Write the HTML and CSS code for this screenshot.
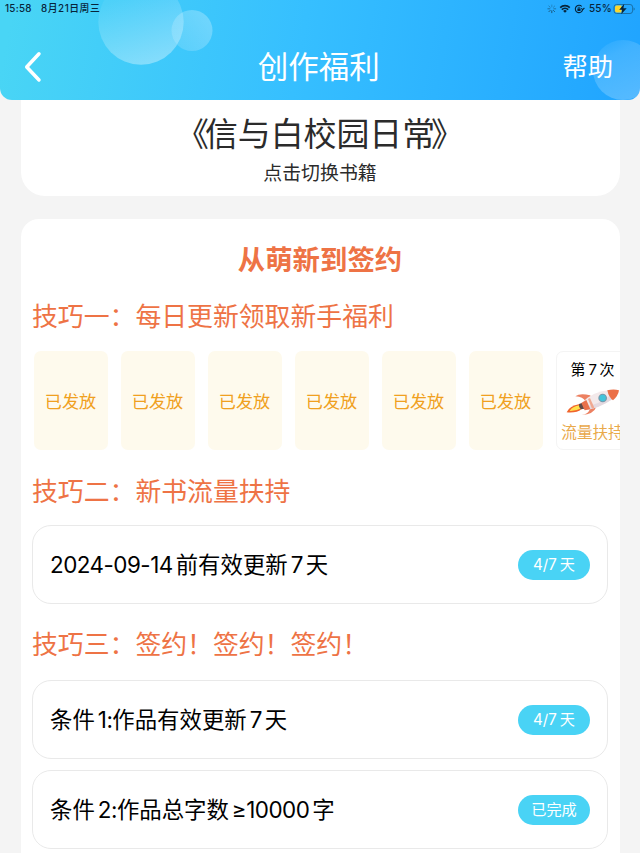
FILE: index.html
```html
<!DOCTYPE html>
<html lang="zh-CN">
<head>
<meta charset="utf-8">
<title>创作福利</title>
<link rel="stylesheet" href="styles.css">
</head>
<body>
<header class="header">
  <svg class="bubbles" width="640" height="100" viewBox="0 0 640 100" aria-hidden="true">
    <defs>
      <linearGradient id="b1" x1="0.25" y1="0" x2="0.6" y2="1"><stop offset="0.2" stop-color="#fff" stop-opacity=".06"/><stop offset="1" stop-color="#fff" stop-opacity=".36"/></linearGradient>
      <linearGradient id="b2" x1="1" y1="0.1" x2="0" y2="0.8"><stop offset="0" stop-color="#fff" stop-opacity=".28"/><stop offset="1" stop-color="#fff" stop-opacity=".14"/></linearGradient>
      <linearGradient id="b3" x1="0.2" y1="0" x2="0.7" y2="1"><stop offset="0" stop-color="#fff" stop-opacity=".04"/><stop offset="0.25" stop-color="#fff" stop-opacity=".14"/><stop offset="1" stop-color="#fff" stop-opacity=".24"/></linearGradient>
    </defs>
    <circle cx="192" cy="30.5" r="20.5" fill="url(#b2)"/>
    <circle cx="141" cy="22" r="42.7" fill="url(#b1)"/>
    <circle cx="623" cy="70" r="30" fill="url(#b3)"/>
  </svg>
  <div class="status">
    <span class="time">15:58</span>
    <span class="date">8月21日周三</span>
    <svg class="status-icons" width="50" height="14" viewBox="0 0 50 14" aria-hidden="true">
      <g transform="translate(-.5 -1.5)">
      <g stroke="#164a68" stroke-width=".9" stroke-linecap="round"><path d="M8.3 4.5v1.9" opacity=".4"/><path d="M11.2 5.5 9.9 6.8" opacity=".45"/><path d="M12.2 8.3h-1.9" opacity=".6"/><path d="M11.2 11.2 9.9 9.9" opacity=".8"/><path d="M8.3 12.2v-1.9"/><path d="M5.4 11.2l1.3-1.3" opacity=".9"/><path d="M4.4 8.3h1.9" opacity=".7"/><path d="M5.4 5.5l1.3 1.3" opacity=".5"/></g>
      <path d="M21.5 12.3 19.6 10.4a2.8 2.8 0 0 1 3.8 0z" fill="#07243a"/>
      <path d="M18.3 9.1a4.6 4.6 0 0 1 6.4 0M16.7 7.1a6.9 6.9 0 0 1 9.6 0" fill="none" stroke="#07243a" stroke-width="1.6"/>
      <path d="M38.300 6a3.700 3.700 0 1 0 .9 2.900M40.900 7.500l-1.600 1.600-1.600-1.200" fill="none" stroke="#07243a" stroke-width="1.1"/>
      <rect x="33.900" y="8.100" width="3.200" height="2.400" rx=".4" fill="#07243a"/><path d="M34.600 8.200v-.8a.9.9 0 0 1 1.800 0v.8" fill="none" stroke="#07243a" stroke-width=".7"/>
      </g>
    </svg>
    <span class="percent">55%</span>
    <svg class="battery" width="23" height="12" viewBox="0 0 23 12" aria-hidden="true">
      <rect x="1" y="1.5" width="18.6" height="9" rx="2.6" fill="none" stroke="#176b9f" stroke-width=".9"/>
      <path d="M3.8 2.5h4.7v7H3.8A1.8 1.8 0 0 1 2 7.7V4.3a1.8 1.8 0 0 1 1.8-1.8z" fill="#fbd62d"/>
      <path d="M20.6 4.5v3q1.1-.3 1.1-1.5t-1.1-1.5z" fill="#176b9f"/>
      <path d="M11.3.8 6.2 6.7h3L8.2 11.2 13.7 5.2h-3.3z" fill="#07243a"/>
    </svg>
  </div>
  <nav class="nav">
    <svg class="back" width="20" height="32" viewBox="0 0 20 32" aria-hidden="true"><path d="M16 2.8 3.7 16 16 29" fill="none" stroke="#fff" stroke-width="3.5" stroke-linecap="round" stroke-linejoin="round"/></svg>
    <h1 class="nav-title">创作福利</h1>
    <a class="help">帮助</a>
  </nav>
</header>
<main class="page">
  <section class="book">
    <div class="book-title"><span class="open">《</span>信与白校园日常<span class="close">》</span></div>
    <div class="book-hint">点击切换书籍</div>
  </section>
  <section class="panel">
    <h2 class="panel-title">从萌新到签约</h2>
    <h3 class="tip">技巧一：每日更新领取新手福利</h3>
    <div class="rewards">
      <div class="reward">已发放</div>
      <div class="reward">已发放</div>
      <div class="reward">已发放</div>
      <div class="reward">已发放</div>
      <div class="reward">已发放</div>
      <div class="reward">已发放</div>
      <div class="reward next">
        <div class="round">第<span class="num">7</span>次</div>
        <svg class="rocket" width="54" height="32" viewBox="80 136 162 96" aria-hidden="true">
          <path d="M82 215Q90 195 121 190l7 14Q112 218 82 215z" fill="#f0642c"/>
          <path d="M91 211Q99 197 121 194l4 9Q110 212 91 211z" fill="#ffe04a"/>
          <path d="M119 190l10-4 7 18-11 2q-8-7-6-16z" fill="#5d4a49"/>
          <path d="M108 167Q122 156 152 164l8 8-22 10q-6-13-30-15z" fill="#ec8061"/>
          <path d="M127 223Q148 220 152 204l20-7q-9 25-45 26z" fill="#ec8061"/>
          <path d="M128 186Q160 153 207 149l13 26Q178 204 137 208z" fill="#f3e9ea"/>
          <path d="M133 198Q179 193 214 163l6 12Q178 204 137 208z" fill="#e4d9e0"/>
          <path d="M126 187l15-9 12 28-17 3z" fill="#e9704b"/>
          <path d="M146 175l6-3 13 29-7 3z" fill="#f0a890"/>
          <path d="M204 149Q223 144 239 149 236 167 221 179 208 170 204 149z" fill="#eb7048"/>
          <circle cx="190" cy="172" r="13" fill="#7898aa"/><circle cx="190" cy="172" r="9.5" fill="#43c4da"/>
        </svg>
        <div class="boost">流量扶持</div>
      </div>
    </div>
    <h3 class="tip">技巧二：新书流量扶持</h3>
    <div class="task"><span class="task-name"><span class="num first">2024-09-14</span>前有效更新<span class="num">7</span>天</span><span class="badge">4/7<i class="gap"></i>天</span></div>
    <h3 class="tip third">技巧三：签约！签约！签约！</h3>
    <div class="task"><span class="task-name">条件<span class="num last">1:</span>作品有效更新<span class="num">7</span>天</span><span class="badge">4/7<i class="gap"></i>天</span></div>
    <div class="task"><span class="task-name">条件<span class="num last">2:</span>作品总字数<span class="num">≥10000</span>字</span><span class="badge">已完成</span></div>
  </section>
</main>
</body>
</html>
```
FILE: styles.css
```css
* { box-sizing: border-box; }
body {
  margin: 0;
  height: 853px;
  overflow: hidden;
  background: #f4f4f4;
  color: #000;
  font-family: Inter, "Noto Sans CJK SC", sans-serif;
  font-weight: 400;
}
h1, h2, h3 { margin: 0; font-weight: 400; }
svg { display: block; flex: none; }

.header {
  position: relative;
  height: 100px;
  border-radius: 0 0 12px 12px;
  overflow: hidden;
  background: linear-gradient(100deg, #49d5f5 2%, #36bfff 47%, #20a4ff 100%);
}
.bubbles { position: absolute; top: 0; left: 0; }
.status {
  position: relative;
  display: flex;
  align-items: center;
  height: 17px;
  padding: 0 4px 0 5px;
  color: #07243a;
  font-size: 9.8px;
  font-weight: 500;
  line-height: 17px;
  white-space: nowrap;
}
.time { width: 36px; letter-spacing: .3px; }
.date { letter-spacing: .55px; }
.status-icons { margin-left: auto; }
.percent { margin: 0 1px 0 -5px; width: 23px; font-size: 10px; letter-spacing: .15px; }
.nav {
  position: relative;
  display: grid;
  grid-template-columns: 1fr auto 1fr;
  align-items: center;
  height: 83px;
  padding: 16px 27px 0 22.5px;
  color: #fff;
}
.nav-title { font-size: 30.5px; line-height: 40px; margin-left: 2px; }
.help { justify-self: end; font-size: 25.3px; line-height: 36px; }

.page { padding: 0 20.5px; }
.book {
  height: 96px;
  padding-top: 12px;
  border-radius: 0 0 24px 24px;
  background: #fff;
  color: #2b2b2b;
  text-align: center;
}
.book-title { font-size: 32.9px; line-height: 44px; white-space: nowrap; }
.open { margin-right: -4px; }
.close { margin-left: -4px; }
.book-hint { margin-top: 5px; font-size: 18.9px; line-height: 26px; }

.panel {
  height: 650px;
  margin-top: 23px;
  padding: 22px 12px 0;
  border-radius: 18px;
  background: #fff;
  overflow: hidden;
}
.panel-title {
  color: #ee7345;
  font-size: 27.4px;
  font-weight: 700;
  line-height: 38px;
  text-align: center;
}
.tip {
  margin-top: 20px;
  margin-left: -.5px;
  color: #ee7345;
  font-size: 25.85px;
  line-height: 36px;
  white-space: nowrap;
}
.rewards { display: flex; gap: 13px; width: 700px; margin: 16px 0 24px 1px; }
.reward {
  display: flex;
  align-items: center;
  justify-content: center;
  flex: none;
  width: 74px;
  height: 99px;
  padding-bottom: 1px;
  border-radius: 7px;
  background: #fefaed;
  color: #f0a020;
  font-size: 17.1px;
}
.reward.next {
  flex-direction: column;
  justify-content: flex-start;
  padding: 0;
  border: 1px solid #f4f4f4;
  background: #fff;
}
.round { margin-top: 7px; color: #000; font-size: 15px; line-height: 22px; white-space: nowrap; }
.rocket { margin: 5px 0 0; }
.boost { margin-top: 4px; color: #e9a94b; font-size: 15.6px; line-height: 22px; white-space: nowrap; }
.rewards + .tip { margin-top: 0; }
.tip.third { margin-top: 23px; }
.task {
  display: flex;
  align-items: center;
  justify-content: space-between;
  height: 79px;
  margin: 16px 0 0 -.5px;
  padding: 0 16.5px 0 17px;
  border: 1px solid #e9e9e9;
  border-radius: 19px;
}
.rewards + .tip + .task { margin-top: 15px; }
.tip.third + .task { margin-top: 17px; }
.task + .task { margin-top: 11px; }
.task-name { font-size: 22.4px; line-height: 32px; white-space: nowrap; }
.num { margin: 0 3px; letter-spacing: -.5px; }
.num.first { margin-left: 0; }
.num.last { margin-right: 0; }
.badge {
  display: flex;
  align-items: center;
  justify-content: center;
  width: 72px;
  height: 30px;
  border-radius: 15px;
  background: #49d3f5;
  color: #fff;
  font-size: 15.2px;
  line-height: 22px;
}
.gap { width: 3px; }
```
